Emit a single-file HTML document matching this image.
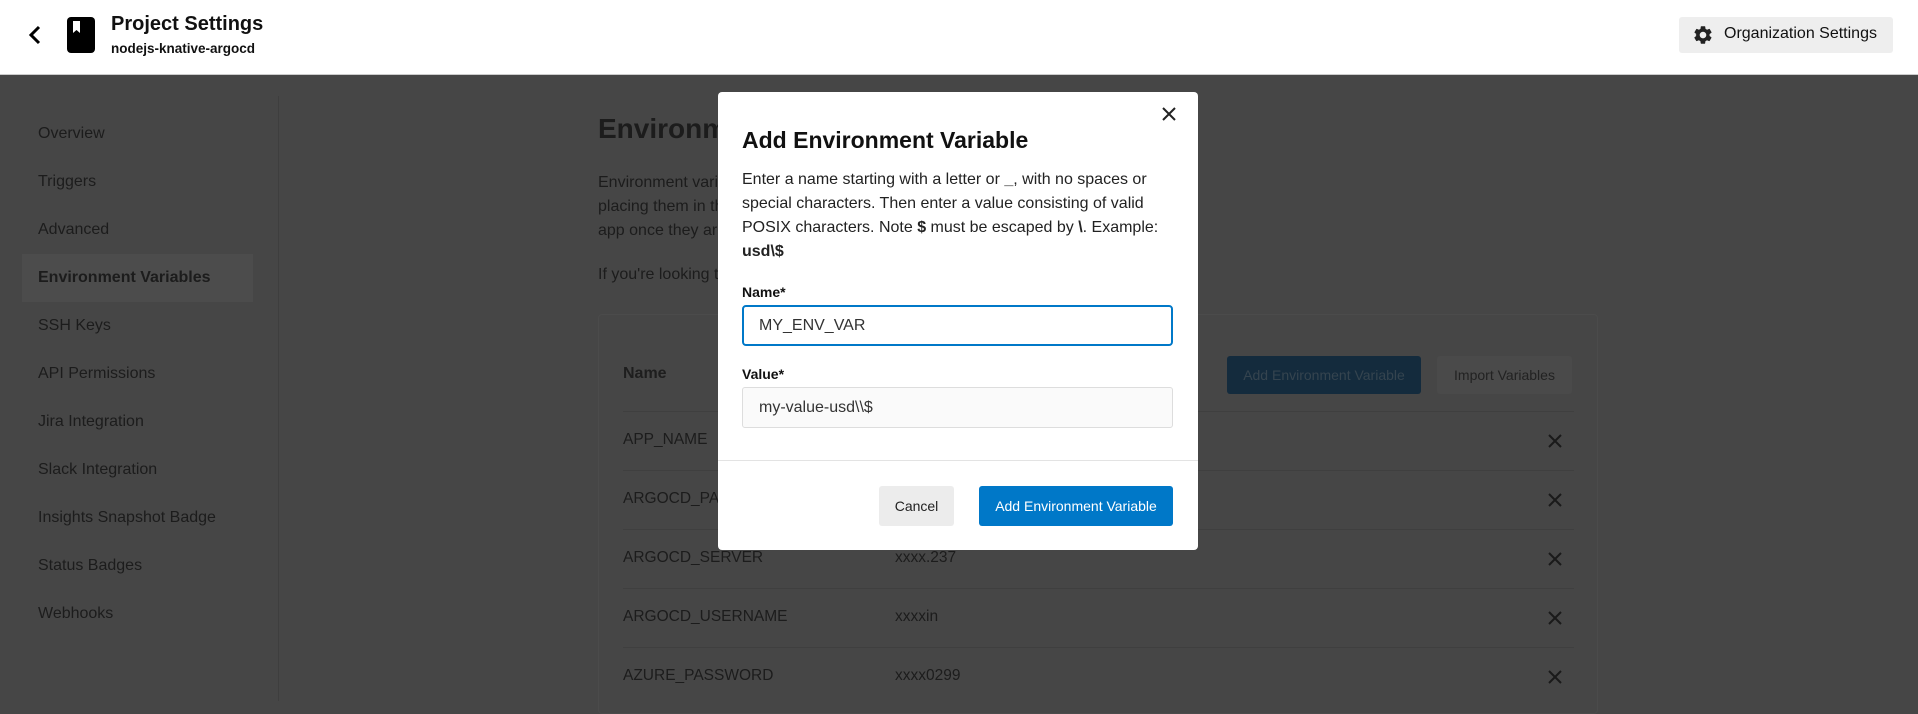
<!DOCTYPE html>
<html><head><meta charset="utf-8"><style>
*{box-sizing:border-box;margin:0;padding:0}
body{width:1918px;height:701px;overflow:hidden;background:#464646;font-family:"Liberation Sans",sans-serif;position:relative;color:#1e1e1e}
.hdr{position:absolute;left:0;top:0;width:1918px;height:75px;background:#fff;border-bottom:1px solid #ccc}
.abs{position:absolute;white-space:nowrap}
.side{font-size:16px;color:#1c1c1c}
.tb{font-size:15.5px;color:#1c1c1c}
.row{position:absolute;left:623px;width:951px;height:1px;background:#3f3f3f}
.x{position:absolute;left:1547px;width:16px;height:16px}
</style></head><body>
<div class="hdr">
 <svg class="abs" style="left:26px;top:24px" width="18" height="22" viewBox="0 0 18 22"><path d="M13 3 L5 11 L13 19" stroke="#000" stroke-width="3" fill="none"/></svg>
 <svg class="abs" style="left:67px;top:17px" width="28" height="36" viewBox="0 0 28 36"><rect x="0" y="0" width="28" height="36" rx="4" fill="#000"/><path d="M6 4 h7 v12 l-3.5 -3 l-3.5 3z" fill="#fff"/></svg>
 <div class="abs" style="left:111px;top:13px;font-size:20px;font-weight:bold;color:#111">Project Settings</div>
 <div class="abs" style="left:111px;top:41px;font-size:13.5px;font-weight:bold;color:#111">nodejs-knative-argocd</div>
 <div class="abs" style="left:1679px;top:17px;width:214px;height:36px;background:#eee;border-radius:3px"></div>
 <svg class="abs" style="left:1692px;top:24px" width="22" height="22" viewBox="0 0 24 24"><path fill="#222" d="M19.14 12.94c.04-.3.06-.61.06-.94 0-.32-.02-.64-.07-.94l2.03-1.58a.49.49 0 00.12-.61l-1.92-3.32a.49.49 0 00-.59-.22l-2.39.96c-.5-.38-1.030-.7-1.62-.94l-.36-2.54a.48.48 0 00-.48-.41h-3.84c-.24 0-.43.17-.47.41l-.36 2.54c-.59.24-1.13.57-1.62.94l-2.39-.96a.48.48 0 00-.59.22L2.74 8.87c-.12.21-.08.47.12.61l2.03 1.580c-.5.3-.8.63-.8.94s.2.64.7.94l-2.030 1.580a.49.49 0 00-.12.61l1.92 3.320c.12.22.37.29.59.22l2.39-.96c.5.38 1.030.7 1.62.94l.36 2.540c.5.24.24.41.48.41h3.84c.24 0 .44-.17.47-.41l.36-2.54c.59-.24 1.13-.56 1.62-.94l2.39.96c.22.08.47 0 .59-.22l1.92-3.32c.12-.22.07-.47-.12-.61l-2.01-1.58zM12 15.6c-1.98 0-3.6-1.62-3.6-3.6s1.62-3.6 3.6-3.6 3.6 1.62 3.6 3.6-1.62 3.6-3.6 3.6z"/></svg>
 <div class="abs" style="left:1724px;top:25px;font-size:16px;color:#111">Organization Settings</div>
</div>
<div class="abs" style="left:22px;top:254px;width:231px;height:48px;background:#4c4c4c"></div>
<div class="abs" style="left:278px;top:96px;width:1px;height:605px;background:#3e3e3e"></div>
<div class="abs side" style="left:38px;top:125px">Overview</div>
<div class="abs side" style="left:38px;top:173px">Triggers</div>
<div class="abs side" style="left:38px;top:221px">Advanced</div>
<div class="abs side" style="left:38px;top:269px;font-weight:bold">Environment Variables</div>
<div class="abs side" style="left:38px;top:317px">SSH Keys</div>
<div class="abs side" style="left:38px;top:365px">API Permissions</div>
<div class="abs side" style="left:38px;top:413px">Jira Integration</div>
<div class="abs side" style="left:38px;top:461px">Slack Integration</div>
<div class="abs side" style="left:38px;top:509px">Insights Snapshot Badge</div>
<div class="abs side" style="left:38px;top:557px">Status Badges</div>
<div class="abs side" style="left:38px;top:605px">Webhooks</div>
<div class="abs" style="left:598px;top:113px;font-size:28px;font-weight:bold;color:#1c1c1c">Environment Variables</div>
<div class="abs side" style="left:598px;top:171px;line-height:24px">Environment variables<br>placing them in the<br>app once they are</div>
<div class="abs side" style="left:598px;top:266px">If you're looking to</div>
<div class="abs" style="left:598px;top:314px;width:1000px;height:400px;border:1px solid #4b4b4b;border-radius:4px"></div>
<div class="abs" style="left:623px;top:365px;font-size:16px;font-weight:bold;color:#1e1e1e">Name</div>
<div class="abs" style="left:1227px;top:356px;width:194px;height:38px;background:#142b3d;border-radius:3px;color:#35444f;font-size:14px;text-align:center;line-height:38px">Add Environment Variable</div>
<div class="abs" style="left:1437px;top:356px;width:135px;height:38px;background:#4a4a4a;border-radius:3px;color:#222;font-size:14px;text-align:center;line-height:38px">Import Variables</div>
<div class="row" style="top:411px"></div><div class="row" style="top:470px"></div><div class="row" style="top:529px"></div><div class="row" style="top:588px"></div><div class="row" style="top:647px"></div>
<div class="abs tb" style="left:623px;top:431px">APP_NAME</div>
<div class="abs tb" style="left:623px;top:490px">ARGOCD_PASSWORD</div>
<div class="abs tb" style="left:623px;top:549px">ARGOCD_SERVER</div><div class="abs tb" style="left:895px;top:549px">xxxx.237</div>
<div class="abs tb" style="left:623px;top:608px">ARGOCD_USERNAME</div><div class="abs tb" style="left:895px;top:608px">xxxxin</div>
<div class="abs tb" style="left:623px;top:667px">AZURE_PASSWORD</div><div class="abs tb" style="left:895px;top:667px">xxxx0299</div>
<svg class="x" style="top:433px" viewBox="0 0 16 16"><path d="M2 2L14 14M14 2L2 14" stroke="#1a1a1a" stroke-width="2"/></svg>
<svg class="x" style="top:492px" viewBox="0 0 16 16"><path d="M2 2L14 14M14 2L2 14" stroke="#1a1a1a" stroke-width="2"/></svg>
<svg class="x" style="top:551px" viewBox="0 0 16 16"><path d="M2 2L14 14M14 2L2 14" stroke="#1a1a1a" stroke-width="2"/></svg>
<svg class="x" style="top:610px" viewBox="0 0 16 16"><path d="M2 2L14 14M14 2L2 14" stroke="#1a1a1a" stroke-width="2"/></svg>
<svg class="x" style="top:669px" viewBox="0 0 16 16"><path d="M2 2L14 14M14 2L2 14" stroke="#1a1a1a" stroke-width="2"/></svg>

<div class="abs" style="left:718px;top:92px;width:480px;height:458px;background:#fff;border-radius:4px">
 <svg class="abs" style="left:443px;top:14px" width="16" height="16" viewBox="0 0 16 16"><path d="M2 2L14 14M14 2L2 14" stroke="#222" stroke-width="2"/></svg>
 <div class="abs" style="left:24px;top:35px;font-size:23px;font-weight:bold;color:#111">Add Environment Variable</div>
 <div class="abs" style="left:24px;top:76px;width:440px;white-space:normal;font-size:16px;line-height:24px;color:#222">Enter a name starting with a letter or <b>_</b>, with no spaces or special characters. Then enter a value consisting of valid POSIX characters. Note <b>$</b> must be escaped by <b>\</b>. Example: <b>usd\$</b></div>
 <div class="abs" style="left:24px;top:192px;font-size:14px;font-weight:bold;color:#111">Name*</div>
 <div class="abs" style="left:24px;top:213px;width:431px;height:41px;border:2px solid #0078c8;border-radius:4px;padding-left:15px;line-height:37px;font-size:16px;color:#333">MY_ENV_VAR</div>
 <div class="abs" style="left:24px;top:274px;font-size:14px;font-weight:bold;color:#111">Value*</div>
 <div class="abs" style="left:24px;top:295px;width:431px;height:41px;border:1px solid #ddd;background:#fafafa;border-radius:3px;padding-left:16px;line-height:39px;font-size:16px;color:#333">my-value-usd\\$</div>
 <div class="abs" style="left:0;top:368px;width:480px;height:1px;background:#e3e3e3"></div>
 <div class="abs" style="left:161px;top:394px;width:75px;height:40px;background:#ececec;border-radius:3px;text-align:center;line-height:40px;font-size:14px;color:#222">Cancel</div>
 <div class="abs" style="left:261px;top:394px;width:194px;height:40px;background:#0078c8;border-radius:3px;text-align:center;line-height:40px;font-size:14px;color:#fff">Add Environment Variable</div>
</div>
</body></html>
